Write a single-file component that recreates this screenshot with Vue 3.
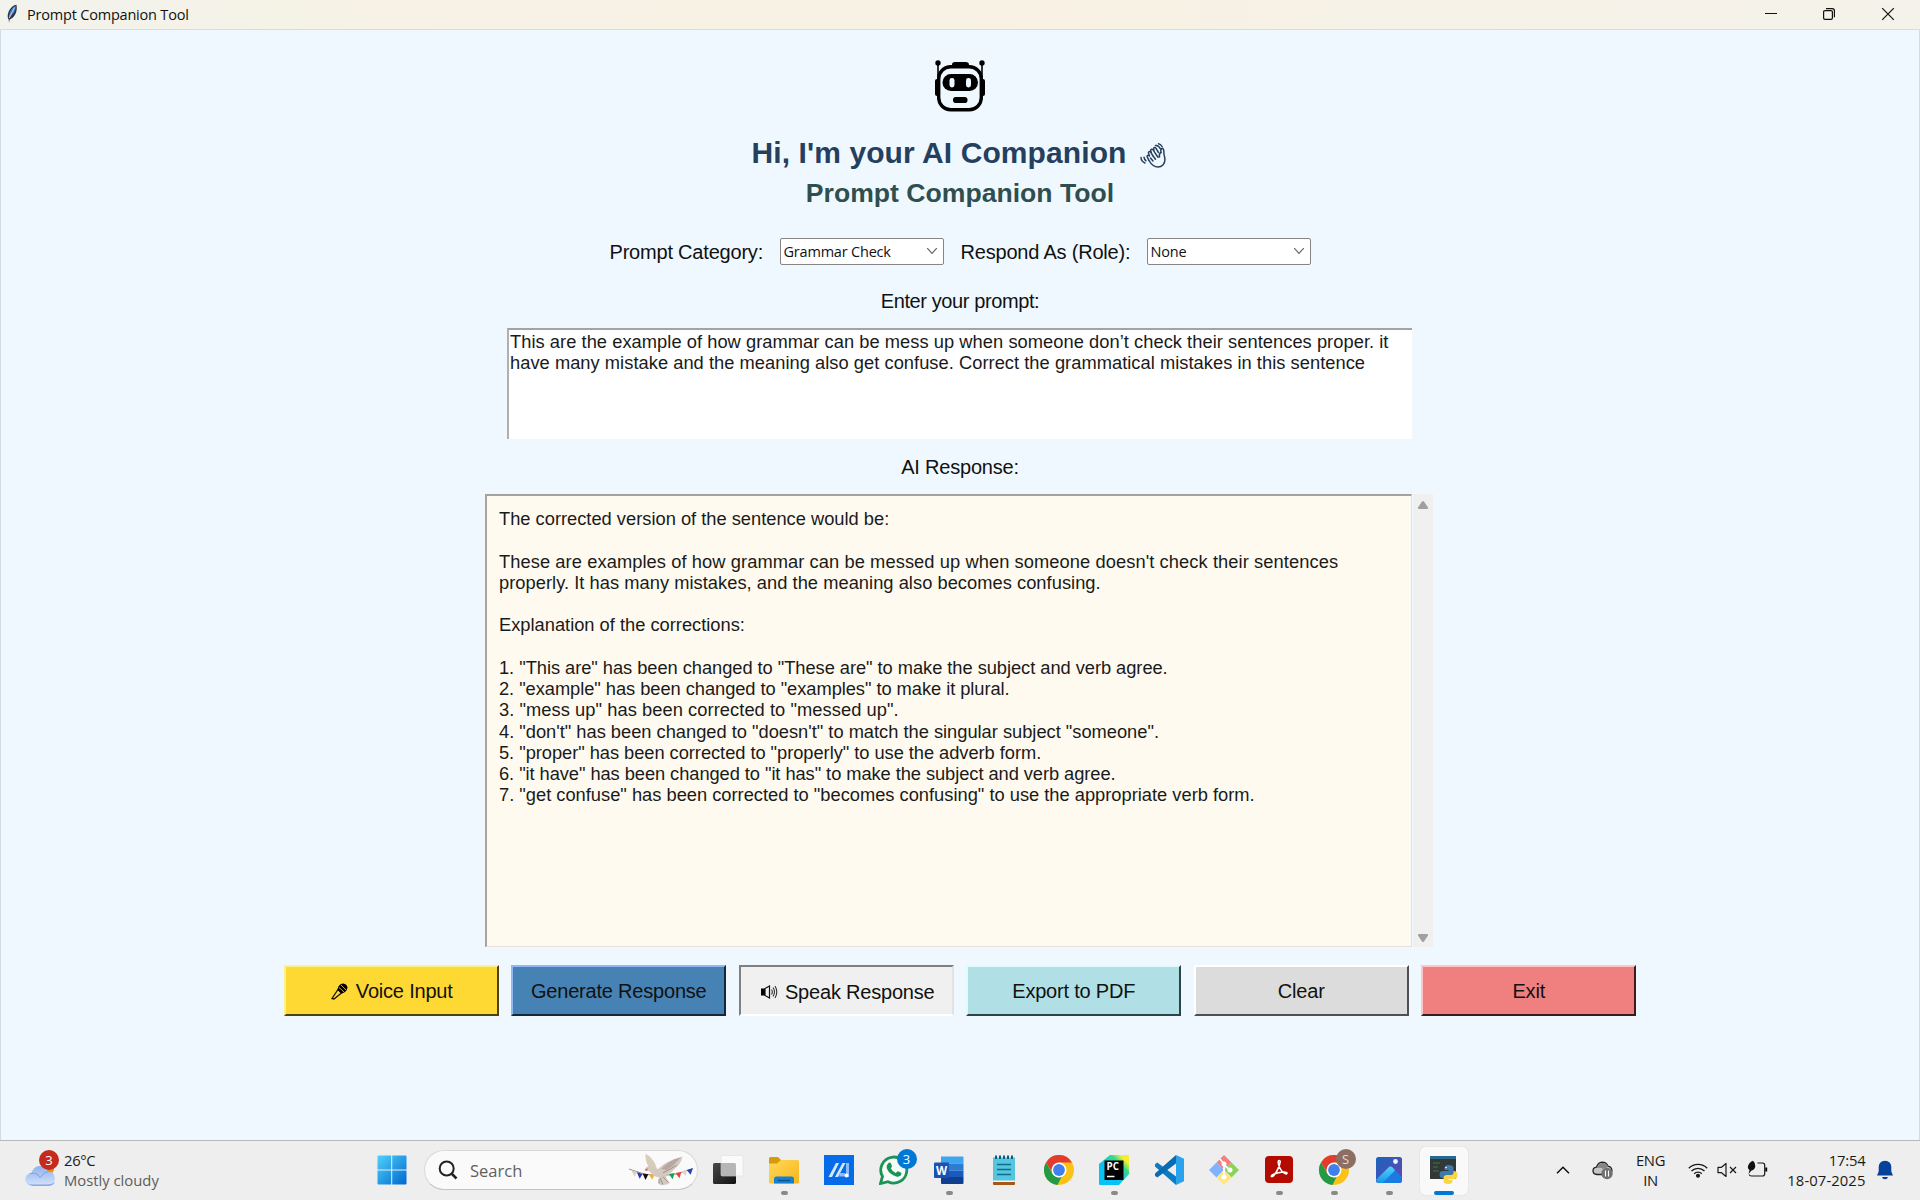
<script setup>
const promptLines = [
  { text: 'This are the example of how grammar can be mess up when someone don’t check their sentences proper. it', track: 0.045 },
  { text: 'have many mistake and the meaning also get confuse. Correct the grammatical mistakes in this sentence', track: 0.035 },
]
const responseLines = [
  { text: 'The corrected version of the sentence would be:', track: 0 },
  { text: '', track: 0 },
  { text: 'These are examples of how grammar can be messed up when someone doesn\'t check their sentences', track: 0.08 },
  { text: 'properly. It has many mistakes, and the meaning also becomes confusing.', track: 0.035 },
  { text: '', track: 0 },
  { text: 'Explanation of the corrections:', track: 0 },
  { text: '', track: 0 },
  { text: '1. "This are" has been changed to "These are" to make the subject and verb agree.', track: -0.045 },
  { text: '2. "example" has been changed to "examples" to make it plural.', track: -0.05 },
  { text: '3. "mess up" has been corrected to "messed up".', track: 0.06 },
  { text: '4. "don\'t" has been changed to "doesn\'t" to match the singular subject "someone".', track: -0.01 },
  { text: '5. "proper" has been corrected to "properly" to use the adverb form.', track: -0.045 },
  { text: '6. "it have" has been changed to "it has" to make the subject and verb agree.', track: -0.065 },
  { text: '7. "get confuse" has been corrected to "becomes confusing" to use the appropriate verb form.', track: 0 },
]
</script>

<template>
  <div class="screen">
    <header class="titlebar">
      <svg class="feather" width="12" height="20" viewBox="0 0 12 20">
        <path d="M10.5 .8C6.5 1.200 2.200 6 1.700 11.500c-.1 1.500.2 3 1 4L3 18.800l.7-3.300C8 14 10.800 9 10.800 4z" fill="#334" />
        <path d="M9.800 1.800C6 3.500 3.200 8 2.900 12.800 7 11 9.800 7 9.800 1.800z" fill="#3f7fd0" />
        <path d="M8.500 3.500L3.200 14" stroke="#a9cdf2" stroke-width="1.100" />
      </svg>
      <span class="apptitle">Prompt Companion Tool</span>
      <div class="winbtns">
        <svg width="14" height="14" viewBox="0 0 14 14"><path d="M1 6.500h12" stroke="#111" stroke-width="1" /></svg>
        <svg class="restore" width="14" height="14" viewBox="0 0 14 14" fill="none" stroke="#111" stroke-width="1.200"><rect x="1.600" y="3.600" width="8.800" height="8.800" rx="1.300" /><path d="M4 1.600h6.200a2.200 2.200 0 0 1 2.200 2.200v6.400" /></svg>
        <svg width="14" height="14" viewBox="0 0 14 14"><path d="M1.200 1.200l11.600 11.600M12.800 1.200L1.200 12.800" stroke="#111" stroke-width="1.200" /></svg>
      </div>
    </header>

    <main class="body">
      <svg class="robot" width="50" height="52" viewBox="0 0 50 52">
        <path d="M3 3v22M47 3v22" stroke="#000" stroke-width="1.600" />
        <circle cx="3" cy="3" r="2.700" /><circle cx="47" cy="3" r="2.700" />
        <path d="M17 6V4.500Q17 2 20 2h10.500Q34 2 34 4.500V6z" />
        <rect x="3.700" y="6.700" width="42.600" height="43" rx="12" fill="none" stroke="#000" stroke-width="3.400" />
        <rect x="0" y="19" width="4.500" height="17" rx="2" /><rect x="45.500" y="19" width="4.500" height="17" rx="2" />
        <rect x="7.500" y="14" width="35.500" height="17" rx="8.500" />
        <rect x="14.500" y="18" width="5" height="9.500" rx="2.400" fill="#f0f8ff" /><rect x="31" y="18" width="5" height="9.500" rx="2.400" fill="#f0f8ff" />
        <rect x="18" y="37" width="14.500" height="6" rx="2.800" />
      </svg>
      <h1 class="hello">
        <span>Hi, I'm your AI Companion</span>
        <svg width="26" height="26" viewBox="0 0 26 26" fill="none" stroke="#24405e" stroke-width="1.500" stroke-linecap="round" stroke-linejoin="round">
          <path d="M9 18.500l-1.800-3.600c-.5-1.400 1-2.300 2-1.100M9.500 14l-1-2.800c-.4-1.500 1.300-2.300 2.200-1l2 3.300M11.300 10.500L10.700 8.800c-.3-1.600 1.500-2.200 2.400-.9l2.600 4M14 8.500l-.4-1.600c-.1-1.500 1.600-1.900 2.400-.6l2.500 4.200" />
          <path d="M9 18.500C11 22 13.500 25 18 25c4 0 6.800-3 6.900-7 .1-3-.9-4.500-1-6.500.1-2.500-.2-4.500-1.200-5-1.700-.5-2.200 1.500-1.700 4" />
          <path d="M21 10.500q-2.200 1-1.500 4.500M13 14l2.500 3.200M10.500 16l2.500 3M16 12.500l2 2.700" />
          <path d="M15.500 3.500q3-.5 5 3.500M18.500 1.800q2.500.5 3.700 3M1 15.500c.2 3 1.800 4.600 4 5.500M4 15.200c.2 1.600.8 2.700 1.900 3.500" />
        </svg>
      </h1>
      <h2 class="sub">Prompt Companion Tool</h2>

      <div class="options">
        <label class="lbl cat">Prompt Category:</label>
        <div class="combo"><span>Grammar Check</span><svg width="12" height="8" viewBox="0 0 12 8"><path d="M1.200 1.200L6 6.400l4.800-5.200" fill="none" stroke="#666" stroke-width="1.200" /></svg></div>
        <label class="lbl role">Respond As (Role):</label>
        <div class="combo"><span>None</span><svg width="12" height="8" viewBox="0 0 12 8"><path d="M1.200 1.200L6 6.400l4.800-5.200" fill="none" stroke="#666" stroke-width="1.200" /></svg></div>
      </div>

      <div class="lbl enter">Enter your prompt:</div>
      <div class="prompt"><div v-for="(l, i) in promptLines" :key="i" class="line" :style="{ letterSpacing: l.track + 'px' }">{{ l.text }}</div></div>

      <div class="lbl airesp">AI Response:</div>
      <div class="outwrap">
        <div class="output"><div v-for="(l, i) in responseLines" :key="i" class="line" :style="{ letterSpacing: l.track + 'px' }">{{ l.text }}</div></div>
        <div class="scroll">
          <svg width="12" height="10" viewBox="0 0 12 10"><path d="M5 1.500Q6 .5 7 1.500L11 7.500Q11.300 9 10 9H2Q.700 9 1 7.500z" fill="#a0a0a0" /></svg>
          <svg width="12" height="10" viewBox="0 0 12 10"><path d="M5 8.500Q6 9.500 7 8.500L11 2.500Q11.300 1 10 1H2Q.700 1 1 2.500z" fill="#a0a0a0" /></svg>
        </div>
      </div>

      <div class="buttons">
        <button class="btn voice">
          <svg width="19" height="18" viewBox="0 0 19 18"><path d="M2 16.500L8 7.500l3.500 3.500L4 17z" fill="none" stroke="#111" stroke-width="1.300" /><path d="M7.500 7.500Q8.500 2 13 1.500q4 .5 4.500 4-.8 5-6 6z" /><path d="M9 5.500l5 4.500M11 3l5 5" stroke="#ffd933" stroke-width=".8" /></svg>
          <span>Voice Input</span>
        </button>
        <button class="btn generate"><span>Generate Response</span></button>
        <button class="btn speak">
          <svg width="18" height="14" viewBox="0 0 18 14"><rect x="1" y="3.500" width="4" height="7" /><path d="M5 3.500L9.500 1v12L5 10.500z" fill="none" stroke="#111" stroke-width="1.200" /><path d="M11.500 4.500q1.700 2.500 0 5M13 2.500q3 4.500 0 9M15 1q3.600 6 0 12" fill="none" stroke="#333" stroke-width="1.100" /></svg>
          <span>Speak Response</span>
        </button>
        <button class="btn export"><span>Export to PDF</span></button>
        <button class="btn clear"><span>Clear</span></button>
        <button class="btn exit"><span>Exit</span></button>
      </div>
    </main>

    <footer class="taskbar">
      <div class="weather">
        <div class="cloudbox">
          <svg width="32" height="28" viewBox="0 0 32 28">
            <defs><linearGradient id="cl" x1="0" y1="0" x2="0" y2="1"><stop offset="0" stop-color="#8fb2ee" /><stop offset="1" stop-color="#d3e3fb" /></linearGradient></defs>
            <circle cx="23" cy="9" r="6" fill="#f38b1c" />
            <path d="M7 26a6.500 6.500 0 0 1-.5-13C8 7.500 12 5.500 16 6c3 .3 5.500 2.500 6.500 5a7.600 7.600 0 0 1 1.500 15z" fill="url(#cl)" />
            <path d="M5 13.500q7-1.500 10 4 4-6 10-6.500" fill="none" stroke="#7c9fdd" stroke-width="1" />
            <path d="M2 23q3 3 6 3h15q5 0 7-4-3 2.500-8 2.500H8q-4 0-6-1.500z" fill="#86a8e3" />
          </svg>
          <span class="badge red">3</span>
        </div>
        <div class="wtext"><div class="temp">26°C</div><div class="cond">Mostly cloudy</div></div>
      </div>

      <div class="cell start">
        <svg width="30" height="30" viewBox="0 0 30 30"><defs><linearGradient id="ws" x1="0" y1="0" x2="1" y2="1"><stop offset="0" stop-color="#4fd2fb" /><stop offset="1" stop-color="#0067d0" /></linearGradient></defs><path d="M1.500.5h12.700v14H.5v-13q0-1 1-1zM15.200.5h13.300q1 0 1 1v13H15.200zM.5 15.500h13.700v14H1.500q-1 0-1-1zM15.200 15.500h14.300v13q0 1-1 1H15.200z" fill="url(#ws)" /></svg>
      </div>

      <div class="search">
        <svg width="20" height="20" viewBox="0 0 20 20" fill="none" stroke="#222" stroke-width="2"><circle cx="8.700" cy="8.500" r="7" /><path d="M13.500 13.500l5 5" stroke-width="2.500" /></svg>
        <span>Search</span>
        <svg class="dove" width="66" height="34" viewBox="0 0 68 34">
          <path d="M1 16q32 14 65 0" fill="none" stroke="#777" stroke-width=".8" />
          <path d="M3 17l6 2-2 5z" fill="#d9cfbb" /><path d="M9 19l6 2-3 5z" fill="#2836a8" /><path d="M15 20.500l6 .8-3 6z" fill="#111" /><path d="M21.500 21.500h6l-2.500 5.500z" fill="#f3b321" />
          <path d="M42 21l6-1-2 6.500z" fill="#17a04a" /><path d="M49 20l6-1-2 6.500z" fill="#ec4036" /><path d="M54.500 18.500l6-2-1 6.500z" fill="#d9d5ca" /><path d="M60.500 17l6.500-2-2.500 7z" fill="#2b3fb8" />
          <path d="M30 17Q28 6 18 0q-.5 8 3.500 14 4 2 8.500 3z" fill="#d8ccbb" />
          <path d="M17 17q2-5 7-4 3 3 7 3 7-8 25-13-1 7-7 12-4 5-9 7-2 5 3 8-3 3-6 2-4 2-6-2 2-3 2-5-7-1-10-6-2-2-6-2z" fill="#d4c9bf" />
          <path d="M34 16Q42 7 54 4q-6 8-14 13z" fill="#b7a9a2" />
          <path d="M36 20q8-4 14-8M33 25l3 7M36 24l6 6M32 26v5" stroke="#998b84" stroke-width="1" fill="none" />
          <path d="M17 17.300l3-2v2.500z" fill="#d5533e" />
        </svg>
      </div>

      <div class="cell taskview">
        <svg width="32" height="32" viewBox="0 0 32 32"><defs><linearGradient id="tv" x1="0" y1="0" x2="1" y2="1"><stop offset="0" stop-color="#4a4a4a" /><stop offset="1" stop-color="#111" /></linearGradient></defs><rect x="1" y="9" width="23" height="21" rx="1.500" fill="url(#tv)" /><rect x="9" y="1.500" width="22" height="20.500" rx="1.500" fill="#fafafa" stroke="#ddd" stroke-width=".6" /><path d="M9 9h13.500q1.500 0 1.500 1.500V22H10.500Q9 22 9 20.500z" fill="#b6b6b6" /></svg>
      </div>
      <div class="cell run">
        <svg width="30" height="30" viewBox="0 0 30 30"><defs><linearGradient id="fo" x1="0" y1="0" x2="1" y2="1"><stop offset="0" stop-color="#ffd95a" /><stop offset="1" stop-color="#f8b51a" /></linearGradient></defs><path d="M0 3.500Q0 2 1.500 2H9l3.500 3.500V9H0z" fill="#d99a08" /><path d="M0 8.500h8l4-3.500h16.500Q30 5 30 6.500V27q0 1.500-1.500 1.500h-27Q0 28.500 0 27z" fill="url(#fo)" /><path d="M5 28.500V24q0-2.500 2.500-2.500h15Q25 21.500 25 24v4.500z" fill="#1480d2" /><path d="M9 25.500h12" stroke="#0b548f" stroke-width="1.400" /></svg>
      </div>
      <div class="cell">
        <svg width="30" height="30" viewBox="0 0 30 30"><rect width="30" height="30" fill="#066be8" /><path d="M4.500 22l7.500-14h3L8 22zM11 22l7.500-14h3L14 22z" fill="#d5e7ff" /><path d="M22 8h3v14h-3zM16 18h5v3.500h-6z" fill="#8ebcf5" /><circle cx="22.500" cy="20.500" r="2" fill="#fff" /></svg>
      </div>
      <div class="cell">
        <svg width="30" height="30" viewBox="0 0 30 30"><path d="M1.500 28.500l2-7A13 13 0 1 1 9 26.700z" fill="#f5fbf7" stroke="#1c9256" stroke-width="2.800" /><path d="M9 8.500q2-2 3 0l1 2.500q.2 1-1.200 2.200 1.500 3.300 5 4.800 1.500-2 2.300-1.800l3 1.500q1 .8-.2 2.600-1.800 2-4.700 1.200-7.500-2.300-9.500-8.500-.5-3 1.300-4.500z" fill="#1c9256" /></svg>
        <span class="badge blue">3</span>
      </div>
      <div class="cell run">
        <svg width="30" height="30" viewBox="0 0 30 30"><path d="M7 1.500h21.500q1 0 1 1V8.500H7z" fill="#41a5ee" /><path d="M7 8.500h22.500v7H7z" fill="#2b7cd3" /><path d="M7 15.500h22.500v6.500H7z" fill="#185abd" /><path d="M7 22h22.500v6q0 1-1 1H8q-1 0-1-1z" fill="#103f91" /><rect x="0" y="7.500" width="15" height="15.500" rx="1" fill="#1a52b4" /><text x="7.500" y="19.500" text-anchor="middle" font-family="Open Sans, sans-serif" font-weight="700" font-size="11.500" fill="#fff">W</text></svg>
      </div>
      <div class="cell">
        <svg width="24" height="30" viewBox="0 0 24 30"><rect x="1" y="25" width="22" height="5" rx="1" fill="#a55716" /><path d="M1 2.500h22V26q0 1-1 1H2q-1 0-1-1z" fill="#58c5df" /><path d="M1 25.500h22V27H1z" fill="#f3f3f3" /><path d="M4 .500v3.500M8 .500v3.500M12 .500v3.500M16 .500v3.500M20 .500v3.500" stroke="#0b5f7c" stroke-width="2" /><path d="M5 9.500h14M5 14.500h14M5 19.500h14" stroke="#0b708e" stroke-width="1.700" /></svg>
      </div>
      <div class="cell">
        <svg width="30" height="30" viewBox="0 0 30 30"><circle cx="15" cy="15" r="15" fill="#fbc116" /><path d="M2 7.500A15 15 0 0 1 28 7.500H15L9 18.800z" fill="#e33b2e" /><path d="M2 7.500L8.500 18.700Q11 23 17.500 22L13.500 30A15 15 0 0 1 2 7.500z" fill="#229a48" /><circle cx="15" cy="15" r="7.500" fill="#fff" /><circle cx="15" cy="15" r="5.900" fill="#3f80ec" /></svg>
      </div>
      <div class="cell run">
        <svg width="30" height="30" viewBox="0 0 30 30"><defs><linearGradient id="pc" x1="0" y1="1" x2="1" y2="0"><stop offset=".4" stop-color="#07c3f2" /><stop offset=".7" stop-color="#35d98c" /><stop offset=".85" stop-color="#f7ec30" /></linearGradient></defs><path d="M11 0h18q1 0 1 1v18L20 30H1q-1 0-1-1V9z" fill="url(#pc)" /><rect x="5.500" y="5.500" width="19" height="19.500" fill="#000" /><text x="7.500" y="15.200" font-family="Open Sans, sans-serif" font-weight="700" font-size="9.800" fill="#fff">PC</text><path d="M8 21.500h7.500" stroke="#fff" stroke-width="1.500" /></svg>
      </div>
      <div class="cell">
        <svg width="30" height="30" viewBox="0 0 30 30"><path d="M1 9.200l2.300-1.800L22 21.500V30L1 11.500z" fill="#0a7bc4" /><path d="M1 20.800l2.300 1.800L22 8.500V0L1 18.500z" fill="#0b6bb0" /><path d="M22 0l8 3.800v22.400L22 30z" fill="#2aa3ef" /></svg>
      </div>
      <div class="cell">
        <svg width="30" height="30" viewBox="0 0 30 30"><path d="M15 0l7.500 7.500L15 15 7.500 7.500z" fill="#f47f7f" /><path d="M22.500 7.500L30 15l-7.500 7.500L15 15z" fill="#8bd35d" /><path d="M7.500 7.500L15 15l-7.500 7.500L0 15z" fill="#80b2ff" /><path d="M15 15l7.500 7.500L15 30l-7.500-7.500z" fill="#ffe681" /><path d="M11 4l4 5v13M15 10l6 5" stroke="#fff" stroke-width="1.800" fill="none" /><circle cx="15" cy="9" r="2.500" fill="#fff" /><circle cx="15" cy="22" r="2.500" fill="#fff" /><circle cx="21" cy="15" r="2.500" fill="#fff" /></svg>
      </div>
      <div class="cell run">
        <svg width="28" height="28" viewBox="0 0 28 28"><rect width="28" height="27" rx="4" fill="#b30b00" /><path d="M6.500 20.500c-1.500-2.500 15-6.500 15.500-3.500-.2 3-8-2-8.800-11 0-2 2.200-2 2 0C14.700 11 9 21.500 6.500 20.500z" fill="none" stroke="#fff" stroke-width="1.600" /></svg>
      </div>
      <div class="cell run">
        <svg width="30" height="30" viewBox="0 0 30 30"><circle cx="15" cy="15" r="15" fill="#fbc116" /><path d="M2 7.500A15 15 0 0 1 28 7.500H15L9 18.800z" fill="#e33b2e" /><path d="M2 7.500L8.500 18.700Q11 23 17.500 22L13.500 30A15 15 0 0 1 2 7.500z" fill="#229a48" /><circle cx="15" cy="15" r="7.500" fill="#fff" /><circle cx="15" cy="15" r="5.900" fill="#3f80ec" /></svg>
        <span class="badge brown">S</span>
      </div>
      <div class="cell run">
        <svg width="26" height="26" viewBox="0 0 26 26"><defs><linearGradient id="ph" x1="0" y1="0" x2="1" y2="1"><stop offset="0" stop-color="#1764bf" /><stop offset="1" stop-color="#6a43ae" /></linearGradient><linearGradient id="pm" x1="0" y1="0" x2="0" y2="1"><stop offset="0" stop-color="#55d0fb" /><stop offset="1" stop-color="#1398ea" /></linearGradient></defs><rect width="26" height="26" rx="2.500" fill="url(#ph)" /><path d="M0.500 22.500L12.500 10.500q2-1.800 4 0L25.500 19.500V23.500q0 2.500-2.500 2.500H3q-2.500 0-2.500-2.500z" fill="#1b7be0" /><path d="M0.500 22.500L12.500 10.500q2-1.800 4 0l1.800 1.800Q19 13.500 18 14.500L6.500 26H3q-2.500 0-2.500-2.500z" fill="url(#pm)" /><circle cx="19.500" cy="4.500" r="2.400" fill="#f2f4ff" /></svg>
      </div>
      <div class="cell active">
        <svg width="28" height="28" viewBox="0 0 28 28"><rect x="0" y="0" width="26" height="23" fill="#333836" /><rect width="26" height="3" fill="#27698f" /><path d="M3 7h7M3 11h5M3 15h6" stroke="#3a7b46" stroke-width="1.200" /><path d="M18 9q5 0 5 3v4q0 3-3 3h-4q-3 0-3 3h-1q-3 0-3-3.500t3-3.500h6v-1h-4v-2q0-3 4-3z" fill="#3d79ad" transform="translate(.5 0)" /><path d="M18.500 28q-5 0-5-3v-3q0-3 3-3h4q3 0 3-3v-1q4 0 4 4t-3 4h-6v1h4v1q0 3-4 3z" fill="#fad447" /><circle cx="16" cy="11.500" r=".8" fill="#fff" /></svg>
      </div>

      <div class="tray">
        <svg class="chev" width="14" height="8" viewBox="0 0 14 8"><path d="M1 7.200l6-6 6 6" fill="none" stroke="#111" stroke-width="1.500" /></svg>
        <svg class="drive" width="21" height="20" viewBox="0 0 21 20"><path d="M5 14.500q-4-.3-4-3.800 0-3 3.500-3.500Q6 2.500 10 2.200q4.500 0 6 4 3.500.5 4 4.300-.5 4-4 4z" fill="#c5c5c5" stroke="#222" stroke-width="1.300" /><path d="M5 8q2-5 6-5t5 4l-5 2q-2-2-6-1z" fill="#858585" /><circle cx="15" cy="13.500" r="5.700" fill="#727272" /><path d="M13.500 10.500v6M16.500 10.500v6" stroke="#fff" stroke-width="1.100" /></svg>
        <div class="lang"><div>ENG</div><div>IN</div></div>
        <svg class="wifi" width="20" height="16" viewBox="0 0 20 16" fill="none" stroke="#181818" stroke-width="1.300"><path d="M.8 6.200a13 13 0 0 1 18.400 0M3.500 9a9.200 9.200 0 0 1 13 0M6.200 11.700a5.400 5.400 0 0 1 7.600 0" /><circle cx="10" cy="13.800" r="1.400" fill="#181818" /></svg>
        <svg class="vol" width="21" height="16" viewBox="0 0 21 16" fill="none" stroke="#181818" stroke-width="1.200"><path d="M1 5.300h3.500L9 1.500v13L4.500 10.700H1z" stroke-linejoin="round" /><path d="M13 5l6 6M19 5l-6 6" /></svg>
        <svg class="bat" width="21" height="18" viewBox="0 0 21 18"><path d="M10.500 3h5q2.200 0 2.200 2.200v8.600q0 2.200-2.200 2.200H4.500q-2 0-2.300-1.500" fill="none" stroke="#181818" stroke-width="1.200" /><path d="M18.300 7.500h1.900v4h-1.900z" /><path d="M.8 7Q1.500 2.500 6 .8 8.500 3 8.300 6.200 8 9.500 4.500 10.500L1.500 14l1-4Q.8 9 .8 7z" fill="#111" /></svg>
        <div class="clock"><div>17:54</div><div class="date">18-07-2025</div></div>
        <svg class="bell" width="18" height="20" viewBox="0 0 18 20"><path d="M9 .800Q15 1 15.300 7v4.500L17 15.500H1l1.700-4V7Q3 1 9 .800zM6 17h6q-.5 2.300-3 2.300T6 17z" fill="#06419c" /></svg>
      </div>
    </footer>
  </div>
</template>

<style>
html, body { margin: 0; background: #f0f8ff; overflow: hidden; }
</style>

<style scoped>
.screen { width: 1920px; height: 1200px; display: flex; flex-direction: column; background: #f0f8ff; font-family: "Liberation Sans", sans-serif; color: #1a1a1a; overflow: hidden; }
svg { display: block; flex: none; }
.titlebar { height: 30px; box-sizing: border-box; flex: none; display: flex; align-items: center; background: linear-gradient(90deg, #f2f3ed 0, #f6f2e5 18%, #f8f1e4 55%, #f4f2ea 100%); border-bottom: 1px solid #d5dde3; font-family: "Open Sans", sans-serif; }
.feather { margin-left: 6px; margin-top: -2px; }
.apptitle { margin-left: 9px; font-size: 14.5px; letter-spacing: -0.2px; color: #111; white-space: nowrap; }
.winbtns { margin-left: auto; margin-right: 25px; display: flex; gap: 44.500px; margin-top: -1px; }
.restore { margin: 0 1px 0 -1px; }
.body { flex: 1; min-height: 0; display: flex; flex-direction: column; align-items: center; border: solid #d3dce4; border-width: 0 1px; box-sizing: border-box; }
.robot { margin: 30px 1px 0 0; }
.hello { margin: 22px 2px 0 0; height: 38px; display: flex; align-items: center; gap: 14px; font-size: 30px; line-height: 38px; font-weight: 700; letter-spacing: 0.09px; color: #24405e; white-space: nowrap; }
.hello svg { margin-top: 3px; }
.sub { margin: 4px 0 0; font-size: 26.600px; line-height: 34px; font-weight: 700; color: #2f4f4f; white-space: nowrap; }
.options { margin-top: 28px; height: 26px; display: flex; align-items: center; }
.lbl { font-size: 20px; line-height: 24px; letter-spacing: -0.2px; color: #111; white-space: nowrap; }
.cat { width: 170px; padding-top: 1px; }
.role { width: 186px; margin-left: 17px; padding-top: 1px; }
.combo { width: 164px; height: 27px; box-sizing: border-box; border: 1px solid #858585; border-radius: 2px; background: #fff; display: flex; align-items: center; justify-content: space-between; padding: 0 5px 0 3px; font-family: "Open Sans", sans-serif; font-size: 14.500px; letter-spacing: -0.2px; color: #111; }
.enter { margin-top: 25px; letter-spacing: -0.4px; }
.prompt { margin-top: 15px; margin-right: 1px; width: 905px; height: 111px; box-sizing: border-box; background: #fff; border-top: 2px solid #a3a3a3; border-left: 2px solid #b0b0b0; padding: 1px 0 0 1px; }
.line { height: 21.250px; line-height: 21.250px; font-size: 18.300px; white-space: pre; color: #1a1a1a; }
.airesp { margin-top: 16px; }
.outwrap { margin-top: 15px; margin-right: 2px; width: 948px; height: 453px; display: flex; justify-content: space-between; }
.output { width: 927px; box-sizing: border-box; background: #fffaf0; border: 1px solid #e5e0d8; border-top: 2px solid #a5a39f; border-left: 2px solid #a5a39f; padding: 12px 0 0 12px; }
.scroll { width: 20px; background: #f0f0f0; display: flex; flex-direction: column; align-items: center; justify-content: space-between; padding: 6px 0 4px; box-sizing: border-box; }
.buttons { margin-top: 18px; display: flex; gap: 12.500px; }
.btn { width: 215px; height: 51px; box-sizing: border-box; margin: 0; padding: 1px 0 0; display: flex; align-items: center; justify-content: center; gap: 7px; font-family: "Liberation Sans", sans-serif; font-size: 20px; letter-spacing: -0.2px; color: #111; white-space: nowrap; border-style: solid; border-width: 2px; border-radius: 0; }
.voice { background: #ffd933; border-color: #fff18a #4c4110 #4c4110 #fff18a; }
.generate { background: #4682b4; border-color: #90b8f5 #14283a #14283a #90b8f5; }
.speak { background: #f0f0f0; border-color: #808080 #e3e3e3 #fff #808080; padding: 3px 0 0 2px; }
.export { background: #b0e0e6; border-color: #e3fafd #2c4447 #2c4447 #e3fafd; }
.clear { background: #dcdcdc; border-color: #fff #505050 #505050 #fff; }
.exit { background: #f08080; border-color: #ffc5c5 #3a1c1c #3a1c1c #ffc5c5; }
.taskbar { height: 60px; box-sizing: border-box; flex: none; display: flex; align-items: center; background: #eee; border-top: 1px solid #b9b9b9; font-family: "Open Sans", sans-serif; font-size: 14.800px; padding-bottom: 1px; }
.weather { width: 339px; margin-left: 25px; display: flex; align-items: center; }
.cloudbox { position: relative; width: 39px; height: 40px; display: flex; align-items: flex-end; margin-top: -4px; }
.badge { position: absolute; width: 20px; height: 20px; border-radius: 50%; color: #fff; display: flex; align-items: center; justify-content: center; font-size: 13px; line-height: 20px; }
.red { left: 14px; top: 2px; background: #c42b1c; }
.blue { left: 30px; top: 8px; background: #0078d4; }
.brown { left: 29px; top: 8px; background: #8d6e63; color: #e6dcd8; }
.wtext { line-height: 20px; }
.temp { letter-spacing: -0.3px; }
.cond { color: #5c5c5c; }
.cell { position: relative; width: 55px; height: 59px; flex: none; display: flex; align-items: center; justify-content: center; }
.cell.run::after { content: ""; position: absolute; left: 24px; top: 50px; width: 7px; height: 4px; border-radius: 2px; background: #898989; }
.search { width: 274px; height: 40px; box-sizing: border-box; margin-left: 5px; border-radius: 20px; background: #fafafa; border: 1px solid #d9d9d9; border-bottom-color: #c4c4c4; display: flex; align-items: center; padding-left: 13px; color: #606060; font-size: 16.500px; }
.search span { margin-left: 12px; }
.dove { margin-left: auto; margin-right: 3px; }
.taskview { width: 58.500px; }
.taskview svg { margin-left: 2px; }
.active::before { content: ""; position: absolute; left: 3px; top: 6px; width: 48px; height: 48px; border-radius: 5px; background: #f9f9f9; box-shadow: 0 0 1px #bbb; }
.active::after { content: ""; position: absolute; left: 17px; top: 50px; width: 20px; height: 4px; border-radius: 2px; background: #0078d4; }
.active svg { position: relative; }
.tray { flex: 1; display: flex; align-items: center; color: #1a1a1a; }
.chev { margin-left: 84px; }
.drive { margin-left: 22px; }
.lang { width: 30px; margin-left: 23px; text-align: center; line-height: 20px; letter-spacing: -0.3px; }
.wifi { margin-left: 22px; }
.vol { margin-left: 9px; }
.bat { margin-left: 9px; margin-top: -2px; }
.clock { width: 98px; text-align: right; line-height: 20px; white-space: nowrap; letter-spacing: -0.2px; }
.date { letter-spacing: 0.1px; }
.bell { margin-left: 10px; }
</style>
